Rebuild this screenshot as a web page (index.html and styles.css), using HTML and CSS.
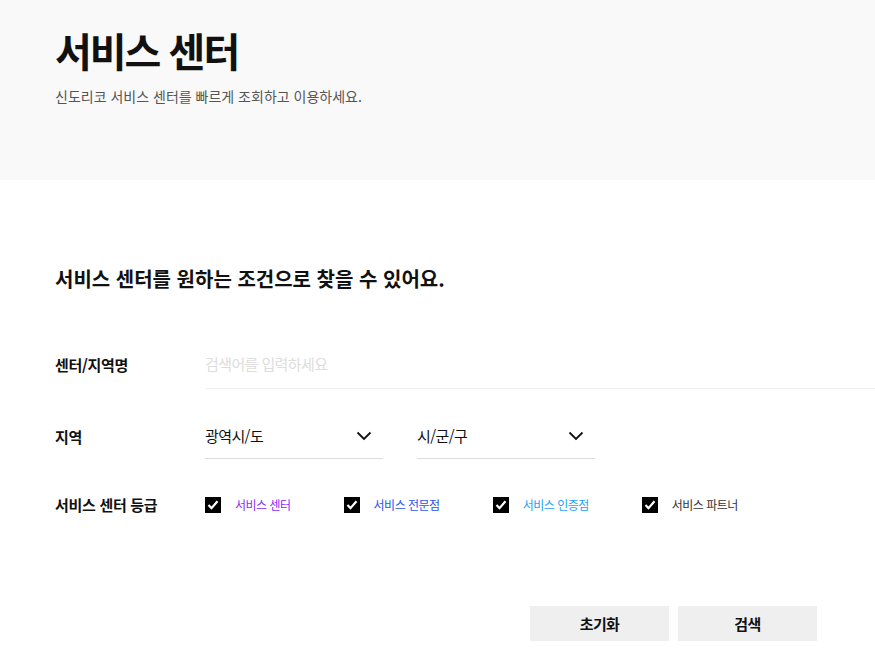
FILE: index.html
```html
<!DOCTYPE html>
<html lang="ko">
<head>
<meta charset="utf-8">
<title>서비스 센터</title>
<link rel="stylesheet" href="styles.css">
</head>
<body>
<header class="hero">
  <h1 class="hero-title">서비스 센터</h1>
  <p class="hero-desc">신도리코 서비스 센터를 빠르게 조회하고 이용하세요.</p>
</header>
<main class="search">
  <h2 class="search-title">서비스 센터를 원하는 조건으로 찾을 수 있어요.</h2>
  <form class="search-form">
    <div class="row row-name">
      <label class="row-label" for="q">센터/지역명</label>
      <div class="field">
        <input id="q" class="text-input" type="text" placeholder="검색어를 입력하세요">
      </div>
    </div>
    <div class="row row-area">
      <span class="row-label">지역</span>
      <div class="selects">
        <div class="select">
          <span>광역시/도</span>
          <svg class="chev" width="16" height="10" viewBox="0 0 16 10"><path d="M1.5 1.5 L8 8 L14.5 1.5" fill="none" stroke="#111" stroke-width="1.8"/></svg>
        </div>
        <div class="select">
          <span>시/군/구</span>
          <svg class="chev" width="16" height="10" viewBox="0 0 16 10"><path d="M1.5 1.5 L8 8 L14.5 1.5" fill="none" stroke="#111" stroke-width="1.8"/></svg>
        </div>
      </div>
    </div>
    <div class="row row-grade">
      <span class="row-label">서비스 센터 등급</span>
      <div class="checks">
        <label class="check"><span class="box"><svg width="12" height="10" viewBox="0 0 12 10"><path d="M1.5 5 L4.5 8.2 L10.5 1.2" fill="none" stroke="#fff" stroke-width="2.2"/></svg></span><span class="c-purple">서비스 센터</span></label>
        <label class="check"><span class="box"><svg width="12" height="10" viewBox="0 0 12 10"><path d="M1.5 5 L4.5 8.2 L10.5 1.2" fill="none" stroke="#fff" stroke-width="2.2"/></svg></span><span class="c-blue">서비스 전문점</span></label>
        <label class="check"><span class="box"><svg width="12" height="10" viewBox="0 0 12 10"><path d="M1.5 5 L4.5 8.2 L10.5 1.2" fill="none" stroke="#fff" stroke-width="2.2"/></svg></span><span class="c-sky">서비스 인증점</span></label>
        <label class="check"><span class="box"><svg width="12" height="10" viewBox="0 0 12 10"><path d="M1.5 5 L4.5 8.2 L10.5 1.2" fill="none" stroke="#fff" stroke-width="2.2"/></svg></span><span class="c-dark">서비스 파트너</span></label>
      </div>
    </div>
    <div class="actions">
      <button type="button" class="btn">초기화</button>
      <button type="button" class="btn">검색</button>
    </div>
  </form>
</main>
</body>
</html>
```
FILE: styles.css
```css
* { box-sizing: border-box; }

html, body {
  margin: 0;
  padding: 0;
  background: #fff;
  color: #111;
  font-family: "Noto Sans CJK KR", "Noto Sans", sans-serif;
}

.hero {
  background: #f9f9f9;
  height: 180px;
  padding: 22px 55px 0;
}

.hero-title {
  margin: 0;
  font-size: 40px;
  font-weight: 700;
  letter-spacing: -2px;
  line-height: 56px;
}

.hero-desc {
  margin: 8px 0 0;
  font-size: 14px;
  color: #555;
  letter-spacing: 0;
  line-height: 20px;
}

.search {
  padding: 84px 0 0 55px;
}

.search-title {
  margin: 0;
  font-size: 20px;
  font-weight: 700;
  letter-spacing: 0;
  line-height: 30px;
}

.search-form {
  margin-top: 45px;
}

.row {
  display: grid;
  grid-template-columns: 150px 1fr;
  align-items: center;
}

.row-label {
  font-size: 15px;
  font-weight: 700;
  letter-spacing: -0.3px;
}

.row-name {
  height: 50px;
}

.field {
  height: 50px;
  border-bottom: 1px solid #f0f0f0;
  display: flex;
  align-items: center;
}

.text-input {
  border: 0;
  outline: 0;
  width: 100%;
  font: inherit;
  font-size: 15px;
  letter-spacing: -0.6px;
  color: #111;
  background: transparent;
  padding: 0;
}

.text-input::placeholder { color: #ddd; }

.row-area {
  margin-top: 24px;
  height: 46px;
}

.selects {
  display: flex;
  gap: 34px;
}

.select {
  width: 178px;
  height: 46px;
  border-bottom: 1px solid #dcdcdc;
  display: flex;
  align-items: center;
  justify-content: space-between;
  padding-right: 11px;
  font-size: 15px;
  letter-spacing: -0.6px;
}

.chev { display: block; }

.row-grade {
  margin-top: 35px;
}

.checks {
  display: flex;
  gap: 53px;
}

.check {
  display: flex;
  align-items: center;
  gap: 14px;
  font-size: 12px;
  letter-spacing: -0.5px;
}

.box {
  width: 16px;
  height: 16px;
  background: #000;
  display: flex;
  align-items: center;
  justify-content: center;
}

.c-purple { color: #8a2cf5; }
.c-blue { color: #1f55f0; }
.c-sky { color: #1ea3f5; }
.c-dark { color: #333; }

.actions {
  display: flex;
  justify-content: flex-end;
  gap: 9px;
  margin-top: 91px;
  padding-right: 58px;
}

.btn {
  width: 139px;
  height: 35px;
  border: 0;
  background: #efefef;
  font: inherit;
  font-size: 15px;
  font-weight: 700;
  color: #111;
  letter-spacing: -0.6px;
}
```
